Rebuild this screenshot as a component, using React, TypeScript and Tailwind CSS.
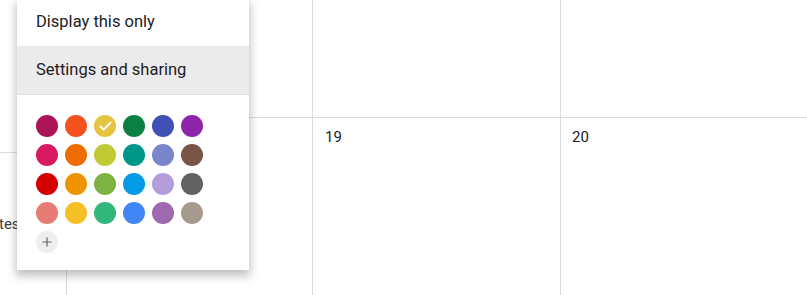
import { Check, Plus } from "lucide-react"

const colors = [
  ["#AD1457", "#F4511E", "#E4C441", "#0B8043", "#3F51B5", "#8E24AA"],
  ["#D81B60", "#EF6C00", "#C0CA33", "#009688", "#7986CB", "#795548"],
  ["#D50000", "#F09300", "#7CB342", "#039BE5", "#B39DDB", "#616161"],
  ["#E67C73", "#F6BF26", "#33B679", "#4285F4", "#9E69AF", "#A79B8E"],
]

function Swatch({ color, checked }: { color: string; checked?: boolean }) {
  return (
    <div
      className="flex h-[22px] w-[22px] items-center justify-center rounded-full"
      style={{ backgroundColor: color }}
    >
      {checked && <Check className="h-[15px] w-[15px] text-white" strokeWidth={3} />}
    </div>
  )
}

export default function App() {
  return (
    <div
      className="relative h-[295px] w-[807px] overflow-hidden bg-white text-[#202124]"
      style={{ fontFamily: "Roboto, 'Liberation Sans', sans-serif" }}
    >
      {/* calendar background */}
      <div className="flex h-full">
        <div className="flex w-[67px] shrink-0 flex-col border-r border-[#dadce0]">
          <div className="h-[153px] border-b border-[#dadce0]" />
          <div className="mt-[62px] -ml-px text-[15px] leading-[18px] text-[#3c4043]">tes</div>
        </div>
        <div className="grid flex-1 grid-cols-[246px_248px_1fr] grid-rows-[118px_1fr]">
          <div className="border-r border-b border-[#dadce0]" />
          <div className="border-r border-b border-[#dadce0]" />
          <div className="border-b border-[#dadce0]" />
          <div className="border-r border-[#dadce0] pl-[12px] pt-[10px] text-[15px] leading-[18px]">18</div>
          <div className="border-r border-[#dadce0] pl-[12px] pt-[10px] text-[15px] leading-[18px]">19</div>
          <div className="pl-[11px] pt-[10px] text-[15px] leading-[18px]">20</div>
        </div>
      </div>

      {/* popup menu */}
      <div className="absolute left-[17px] top-[-2px] w-[232px] bg-white shadow-[0_5px_9px_1px_rgba(0,0,0,0.25)]">
        <div className="flex h-[48px] items-center pl-[19px] text-[16.5px] text-[#202124]">Display this only</div>
        <div className="flex h-[48px] items-center bg-[#ebebeb] pl-[19px] text-[16.5px] text-[#202124]">
          Settings and sharing
        </div>
        <div className="border-t border-[#e0e0e0] pb-[17px] pl-[19px] pt-[20px]">
          <div className="flex flex-col gap-[7px]">
            {colors.map((row, i) => (
              <div key={i} className="flex gap-[7px]">
                {row.map((c, j) => (
                  <Swatch key={c} color={c} checked={i === 0 && j === 2} />
                ))}
              </div>
            ))}
            <div className="flex h-[22px] w-[22px] items-center justify-center rounded-full bg-[#eeeeee]">
              <Plus className="h-[14px] w-[14px] text-[#5f6368]" strokeWidth={2} />
            </div>
          </div>
        </div>
      </div>
    </div>
  )
}
